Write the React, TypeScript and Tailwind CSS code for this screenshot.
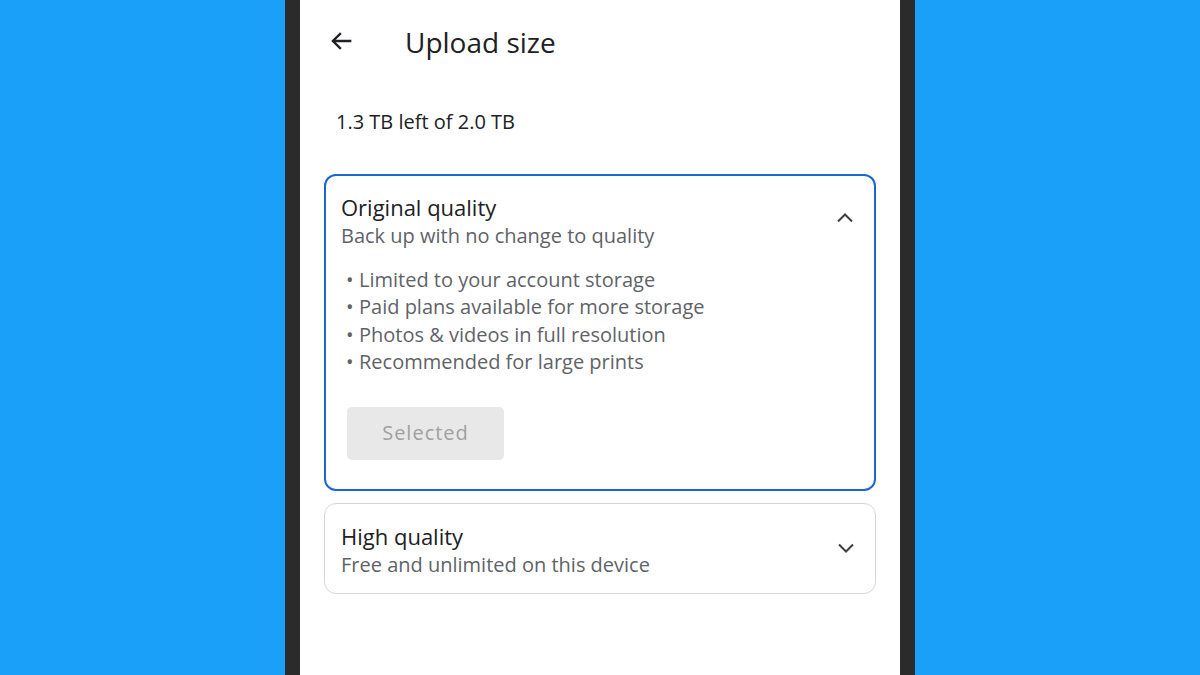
import React from "react";

function ChevronUp() {
  return (
    <svg width="24" height="24" viewBox="0 0 24 24" fill="none">
      <path d="M5 15.5 L12 8.5 L19 15.5" stroke="#3c4043" strokeWidth="2" />
    </svg>
  );
}
function ChevronDown() {
  return (
    <svg width="24" height="24" viewBox="0 0 24 24" fill="none">
      <path d="M5 8.5 L12 15.5 L19 8.5" stroke="#3c4043" strokeWidth="2" />
    </svg>
  );
}

export default function App() {
  const bullets = [
    "Limited to your account storage",
    "Paid plans available for more storage",
    "Photos & videos in full resolution",
    "Recommended for large prints",
  ];
  return (
    <div
      className="w-[1200px] h-[675px] bg-[#1aa0f8] flex justify-center overflow-hidden"
      style={{ fontFamily: "'Open Sans', Roboto, sans-serif" }}
    >
      <div className="w-[630px] h-full bg-[#2b2b2b] px-[15px]">
        <div className="w-[600px] h-full bg-white flex flex-col">
          <div className="h-[84px] flex items-center pl-[28px]">
            <svg width="28" height="28" viewBox="0 0 24 24" fill="none" className="-mt-[2px]">
              <path d="M20 12H4.5M11 5.2L4.2 12l6.8 6.8" stroke="#202124" strokeWidth="2" />
            </svg>
            <div className="ml-[49px] text-[28px] text-[#202124] -mt-[1px]">Upload size</div>
          </div>
          <div className="pl-[36px] mt-[23px] text-[20px] text-[#202124] leading-[30px]">
            1.3 TB left of 2.0 TB
          </div>
          <div className="mx-[24px] mt-[37px] border-2 border-[#1a66d2] rounded-[12px] h-[317px] relative pl-[15px] pt-[16px]">
            <div className="absolute right-[17px] top-[30px]">
              <ChevronUp />
            </div>
            <div className="text-[22px] text-[#202124] leading-[30px]">Original quality</div>
            <div className="text-[20px] text-[#5f6368] leading-[28px]">
              Back up with no change to quality
            </div>
            <div className="mt-[16px] pl-[5px] text-[20px] text-[#5f6368] leading-[27.4px]">
              {bullets.map((b) => (
                <div key={b} className="flex">
                  <span className="w-[13px]">•</span>
                  <span>{b}</span>
                </div>
              ))}
            </div>
            <div className="mt-[31px] ml-[6px] w-[157px] h-[53px] bg-[#e8e8e8] rounded-[5px] flex items-center justify-center text-[20px] text-[#a0a0a0] tracking-[1px]">
              Selected
            </div>
          </div>
          <div className="mx-[24px] mt-[12px] border border-[#d6d6d6] rounded-[12px] h-[91px] relative pl-[16px] pt-[17px]">
            <div className="absolute right-[17px] top-[32px]">
              <ChevronDown />
            </div>
            <div className="text-[22px] text-[#202124] leading-[30px]">High quality</div>
            <div className="text-[20px] text-[#5f6368] leading-[28px]">
              Free and unlimited on this device
            </div>
          </div>
        </div>
      </div>
    </div>
  );
}
